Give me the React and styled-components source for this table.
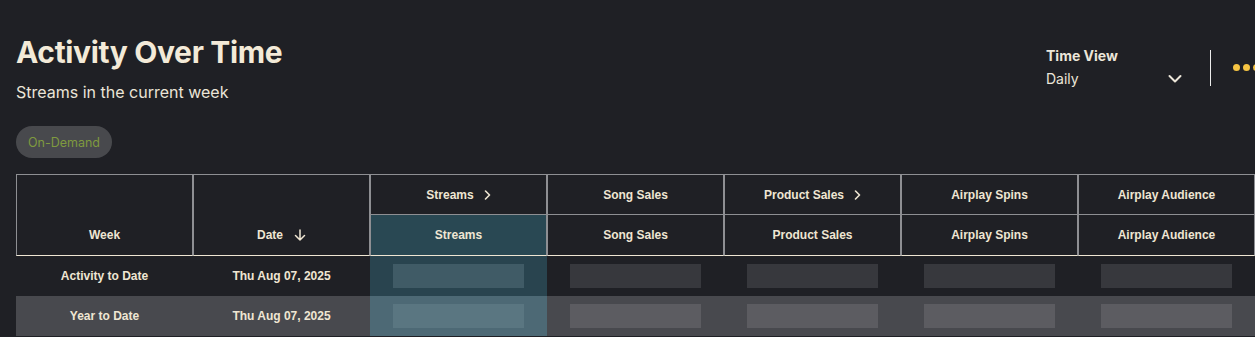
import React from 'react';
import styled, { createGlobalStyle } from 'styled-components';

const GlobalStyle = createGlobalStyle`
  html, body {
    margin: 0;
    overflow: hidden;
    background: #1f2025;
  }
  body {
    font-family: 'Inter', 'Noto Sans', sans-serif;
  }
`

const Page = styled.div`
  width: 1255px;
  padding: 34px 0 0 16px;
`

const Header = styled.header`
  display: flex;
  justify-content: space-between;
  align-items: flex-start;
`

const TitleBlock = styled.div`
  display: flex;
  flex-direction: column;
  align-items: flex-start;
`

const Title = styled.h1`
  margin: 0;
  font-size: 30px;
  line-height: 36px;
  font-weight: 700;
  letter-spacing: -0.35px;
  color: #f3ead8;
`

const Subtitle = styled.p`
  margin: 12px 0 0;
  font-size: 16px;
  line-height: 20px;
  color: #ebe5d8;
`

const Pill = styled.span`
  display: inline-flex;
  align-items: center;
  height: 32px;
  margin-top: 24px;
  padding: 0 12px;
  border-radius: 16px;
  background: #48494d;
  color: #7f9a3f;
  font-size: 12.5px;
`

const Controls = styled.div`
  display: flex;
  align-items: center;
  margin-top: 13px;
  height: 40px;
`

const TimeView = styled.div`
  display: flex;
  flex-direction: column;
  gap: 6px;
  width: 136px;
  color: #ece6d9;
`

const Label = styled.span`
  font-size: 14px;
  line-height: 17px;
  font-weight: 700;
`

const SelectRow = styled.div`
  display: flex;
  justify-content: space-between;
  align-items: center;
  font-size: 14px;
  line-height: 17px;
`

const Divider = styled.span`
  width: 1px;
  height: 36px;
  margin: 2px 22px 0 28px;
  background: #ececec;
`

const Dots = styled.div`
  display: flex;
  gap: 3px;
  width: 38px;
`

const Dot = styled.span`
  width: 7px;
  height: 7px;
  border-radius: 50%;
  background: #f6c443;
`

const Table = styled.table`
  margin-top: 16px;
  width: 1239px;
  table-layout: fixed;
  border-collapse: separate;
  border-spacing: 0;
  font-family: 'Liberation Sans', Arial, sans-serif;
  font-size: 12px;
  font-weight: 700;
  color: #efe6d3;
`

// header cells: grey grid, the lower ones close on a cream rule
const Th = styled.th`
  box-sizing: border-box;
  width: 177px;
  height: ${props => props.$lower ? '42px' : '40px'};
  padding: ${props => props.$tall ? '0 0 12px' : '0'};
  vertical-align: ${props => props.$tall ? 'bottom' : 'middle'};
  line-height: 16px;
  font-weight: 700;
  text-align: center;
  border-top: 1px solid #8e8f93;
  border-left: 1px solid #8e8f93;
  border-right: 1px solid #8e8f93;
  border-bottom: ${props => props.$lower || props.$tall ? '1px solid #efe6d3' : 'none'};
  background: ${props => props.$active ? '#294853' : 'transparent'};
`

const HeadInner = styled.span`
  display: inline-flex;
  align-items: center;
  gap: ${props => props.$gap || 10}px;
`

const Row = styled.tr`
  background: ${props => props.$shade ? '#48494e' : 'transparent'};
`

const Td = styled.td`
  height: 40px;
  padding: 0;
  text-align: center;
  vertical-align: middle;
  background: ${props => props.$active ? (props.$shade ? '#4d6975' : '#29444f') : 'transparent'};
`

const Placeholder = styled.div`
  width: 131px;
  height: 24px;
  margin: 0 auto;
  background: ${props => {
    if (props.$active) return props.$shade ? '#5a7681' : '#405b66'
    return props.$shade ? '#5c5c61' : '#37383d'
  }};
`

const ChevronDown = () => (
  <svg width="14" height="10" viewBox="0 0 14 10" fill="none">
    <polyline points="1.5,2 7,7.5 12.5,2" stroke="#ece6d9" strokeWidth="2" strokeLinecap="round" strokeLinejoin="round" />
  </svg>
)

const ChevronRight = () => (
  <svg width="7" height="10" viewBox="0 0 7 10" fill="none">
    <polyline points="1.5,1 5.5,5 1.5,9" stroke="#efe6d3" strokeWidth="1.6" strokeLinecap="round" strokeLinejoin="round" />
  </svg>
)

const ArrowDown = () => (
  <svg width="12" height="12" viewBox="0 0 12 12" fill="none">
    <path d="M6 1v10M1.5 6.5L6 11l4.5-4.5" stroke="#efe6d3" strokeWidth="1.5" strokeLinecap="round" strokeLinejoin="round" />
  </svg>
)

const metrics = [
  { title: 'Streams', more: true, active: true },
  { title: 'Song Sales' },
  { title: 'Product Sales', more: true },
  { title: 'Airplay Spins' },
  { title: 'Airplay Audience' },
]

const rows = [
  { week: 'Activity to Date', date: 'Thu Aug 07, 2025' },
  { week: 'Year to Date', date: 'Thu Aug 07, 2025', shade: true },
]

export default () => (
  <Page>
    <GlobalStyle />
    <Header>
      <TitleBlock>
        <Title>Activity Over Time</Title>
        <Subtitle>Streams in the current week</Subtitle>
        <Pill>On-Demand</Pill>
      </TitleBlock>
      <Controls>
        <TimeView>
          <Label>Time View</Label>
          <SelectRow>
            <span>Daily</span>
            <ChevronDown />
          </SelectRow>
        </TimeView>
        <Divider />
        <Dots>
          <Dot />
          <Dot />
          <Dot />
        </Dots>
      </Controls>
    </Header>

    <Table>
      <thead>
        <tr>
          <Th rowSpan={2} $tall>Week</Th>
          <Th rowSpan={2} $tall>
            <HeadInner $gap={11}>Date <ArrowDown /></HeadInner>
          </Th>
          {metrics.map(m => (
            <Th key={m.title}>
              <HeadInner>
                {m.title}
                {m.more && <ChevronRight />}
              </HeadInner>
            </Th>
          ))}
        </tr>
        <tr>
          {metrics.map(m => (
            <Th key={m.title} $lower $active={m.active}>{m.title}</Th>
          ))}
        </tr>
      </thead>
      <tbody>
        {rows.map(r => (
          <Row key={r.week} $shade={r.shade}>
            <Td>{r.week}</Td>
            <Td>{r.date}</Td>
            {metrics.map(m => (
              <Td key={m.title} $active={m.active} $shade={r.shade}>
                <Placeholder $active={m.active} $shade={r.shade} />
              </Td>
            ))}
          </Row>
        ))}
      </tbody>
    </Table>
  </Page>
)
